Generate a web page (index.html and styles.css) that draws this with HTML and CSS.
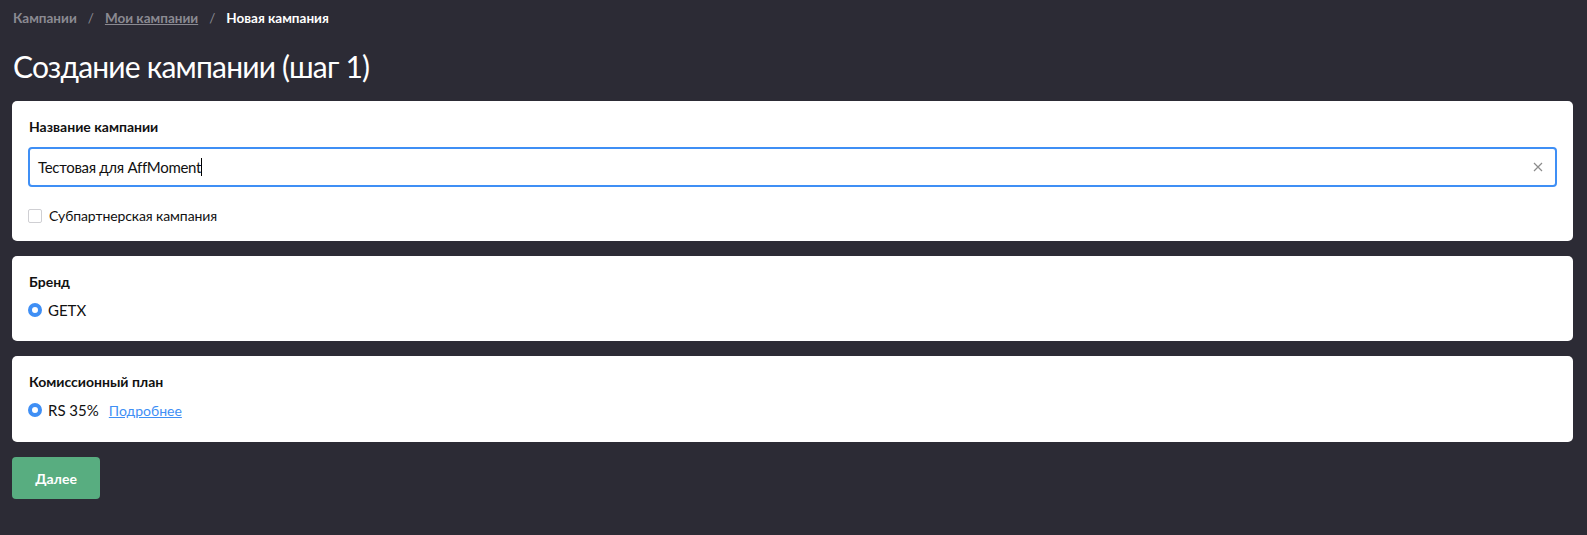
FILE: index.html
```html
<!DOCTYPE html>
<html lang="ru">
<head>
<meta charset="utf-8">
<title>Создание кампании</title>
<link rel="stylesheet" href="styles.css">
</head>
<body>
<div class="page">
  <nav class="crumbs">
    <span class="crumb">Кампании</span>
    <span class="sep">/</span>
    <a class="crumb link" href="#">Мои кампании</a>
    <span class="sep">/</span>
    <span class="crumb current">Новая кампания</span>
  </nav>
  <h1 class="title">Создание кампании (шаг 1)</h1>

  <section class="card card-name">
    <div class="label">Название кампании</div>
    <div class="input">
      <span class="input-text">Тестовая для AffMoment</span><span class="caret"></span>
      <svg class="clear" width="10" height="10" viewBox="0 0 10 10"><path d="M1 1L9 9M9 1L1 9" stroke="#8c8c8c" stroke-width="1.2" fill="none"/></svg>
    </div>
    <label class="check">
      <span class="box"></span>
      <span>Субпартнерская кампания</span>
    </label>
  </section>

  <section class="card card-brand">
    <div class="label">Бренд</div>
    <div class="radio-row">
      <span class="radio"></span>
      <span>GETX</span>
    </div>
  </section>

  <section class="card">
    <div class="label">Комиссионный план</div>
    <div class="radio-row">
      <span class="radio"></span>
      <span>RS 35%</span>
      <a class="more" href="#">Подробнее</a>
    </div>
  </section>

  <button class="btn">Далее</button>
</div>
</body>
</html>
```
FILE: styles.css
```css
html, body {
  margin: 0;
  padding: 0;
  background: #2c2b35;
}
body {
  font-family: Lato, "Noto Sans", sans-serif;
  color: #111;
}
.page {
  padding: 8px 14px 0 12px;
  display: flex;
  flex-direction: column;
}
.crumbs {
  display: flex;
  align-items: center;
  gap: 11px;
  font-size: 13.5px;
  font-weight: 700;
  height: 20px;
  padding-left: 1px;
  color: #8b8a92;
}
.crumb.link {
  color: #8b8a92;
  text-decoration: underline;
}
.crumb.current {
  color: #fff;
}
.sep {
  font-weight: 400;
  color: #8b8a92;
}
.title {
  margin: 20px 0 0 1px;
  font-size: 30px;
  font-weight: 400;
  letter-spacing: -0.8px;
  color: #fff;
  line-height: 36px;
  height: 36px;
}
.card {
  margin-top: 17px;
  background: #fff;
  border-radius: 5px;
  padding: 17px 16px 0 16px;
  height: 86px;
  box-sizing: border-box;
}
.card + .card {
  margin-top: 15px;
}
.card-name {
  height: 140px;
}
.card-brand {
  height: 85px;
}
.label {
  font-size: 14px;
  font-weight: 700;
  line-height: 18px;
  margin-left: 1px;
}
.input {
  margin-top: 11px;
  height: 40px;
  box-sizing: border-box;
  border: 2px solid #3f8ff5;
  border-radius: 4px;
  display: flex;
  align-items: center;
  padding: 0 12px 0 8px;
  font-size: 15px;
  letter-spacing: -0.3px;
  width: 1529px;
}
.caret {
  width: 1px;
  height: 18px;
  background: #000;
  margin-left: 0;
}
.clear {
  margin-left: auto;
}
.check {
  display: flex;
  align-items: center;
  gap: 7px;
  margin-top: 20px;
  font-size: 14px;
  letter-spacing: -0.1px;
}
.box {
  width: 12px;
  height: 12px;
  border: 1px solid #cfcfd3;
  border-radius: 2px;
}
.radio-row {
  display: flex;
  align-items: center;
  margin-top: 10px;
  font-size: 15px;
}
.radio {
  width: 14px;
  height: 14px;
  box-sizing: border-box;
  border-radius: 50%;
  border: 4px solid #3f8ff5;
  background: #fff;
  margin-right: 6px;
}
.more {
  margin-left: 10px;
  color: #3f8ff5;
  text-decoration: underline;
  font-size: 14px;
}
.btn {
  margin-top: 15px;
  width: 88px;
  height: 42px;
  border: none;
  border-radius: 4px;
  background: #58ad80;
  color: #fff;
  font-family: inherit;
  font-size: 14px;
  font-weight: 700;
  cursor: pointer;
}
```
